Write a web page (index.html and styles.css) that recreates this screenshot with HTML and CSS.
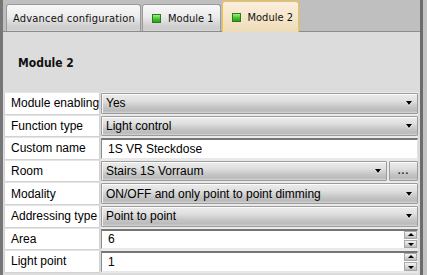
FILE: index.html
```html
<!DOCTYPE html>
<html>
<head>
<meta charset="utf-8">
<link rel="stylesheet" href="styles.css">
</head>
<body>
<div class="window">
  <div class="edge-left"></div>
  <div class="main">
    <div class="tabs">
      <div class="tab wide">Advanced configuration</div>
      <div class="tab"><span class="led"></span>Module 1</div>
      <div class="tab active"><span class="led"></span>Module 2</div>
    </div>
    <div class="panel">
      <div class="title">Module 2</div>
      <div class="form">
        <div class="label">Module enabling</div>
        <div class="field"><div class="select">Yes<span class="arrow"></span></div></div>

        <div class="label">Function type</div>
        <div class="field"><div class="select">Light control<span class="arrow"></span></div></div>

        <div class="label">Custom name</div>
        <div class="field"><div class="input">1S VR Steckdose</div></div>

        <div class="label">Room</div>
        <div class="field with-btn"><div class="select">Stairs 1S Vorraum<span class="arrow"></span></div><div class="dots">...</div></div>

        <div class="label">Modality</div>
        <div class="field"><div class="select">ON/OFF and only point to point dimming<span class="arrow"></span></div></div>

        <div class="label">Addressing type</div>
        <div class="field"><div class="select">Point to point<span class="arrow"></span></div></div>

        <div class="label">Area</div>
        <div class="field"><div class="input spin">6<div class="spinner"><span class="up"></span><span class="down"></span></div></div></div>

        <div class="label">Light point</div>
        <div class="field"><div class="input spin">1<div class="spinner"><span class="up"></span><span class="down"></span></div></div></div>
      </div>
    </div>
  </div>
  <div class="edge-right"></div>
</div>
</body>
</html>
```
FILE: styles.css
```css
html, body {
  margin: 0;
  padding: 0;
}
body {
  width: 427px;
  height: 275px;
  overflow: hidden;
  background: #c0c0c0;
}
.window {
  display: flex;
  height: 275px;
}
.edge-left {
  width: 3px;
  background: #767676;
  flex: none;
}
.edge-right {
  width: 4px;
  flex: none;
  background: #c4c4c4;
  border-left: 3px solid #6c6c6c;
}
.main {
  flex: 1;
  display: flex;
  flex-direction: column;
  min-width: 0;
}
.tabs {
  display: flex;
  align-items: flex-end;
  gap: 1px;
  height: 32px;
  padding-left: 3px;
  background: #bfbfbf;
  border-bottom: 1px solid #8c8c8c;
  box-sizing: border-box;
  font-family: "DejaVu Sans Condensed", "DejaVu Sans", sans-serif;
  font-size: 11px;
  color: #111;
}
.tab {
  display: flex;
  align-items: center;
  height: 27px;
  box-sizing: border-box;
  padding: 1px 6px 0 6px;
  border: 1px solid #9a9a9a;
  border-bottom: none;
  border-radius: 3px 3px 0 0;
  background: linear-gradient(#f7f7f7 0%, #ececec 45%, #d4d4d4 75%, #cbcbcb 92%, #d8d8d8 100%);
}
.tab.wide {
  letter-spacing: 0.2px;
  padding-right: 5px;
}
.tab .led {
  width: 7px;
  height: 7px;
  margin: 0 7px 0 3px;
  border: 1px solid #2d7a1e;
  background: linear-gradient(#9ef07e, #3fbf2a 60%, #2f9f1f);
}
.tab.active {
  height: 31px;
  margin-bottom: -1px;
  border: 1px solid #f4c33e;
  border-bottom: none;
  background: linear-gradient(#fbeedd 0%, #f4e4c6 60%, #eddcb8 100%);
  padding-right: 5px;
  padding-bottom: 1px;
}
.panel {
  flex: 1;
  background: #dcdcdc;
  display: flex;
  flex-direction: column;
}
.title {
  height: 60px;
  box-sizing: border-box;
  padding: 24px 0 0 15px;
  font-family: "DejaVu Sans Condensed", "DejaVu Sans", sans-serif;
  font-weight: bold;
  font-size: 12px;
  color: #111;
}
.form {
  display: grid;
  grid-template-columns: 96px 1fr;
  grid-auto-rows: 22.6px;
  column-gap: 1px;
  padding: 0 2px 0 1px;
  font-family: "Liberation Sans", Arial, sans-serif;
  font-size: 12px;
  color: #000;
}
.label {
  background: #fff;
  border: 1px solid #d2d2d2;
  border-top-color: #e4e4e4;
  display: flex;
  align-items: center;
  padding-left: 6px;
  white-space: nowrap;
  overflow: hidden;
}
.field {
  display: flex;
  align-items: stretch;
  padding: 1px 0;
  gap: 2px;
  background: #eaeaea;
}
.select {
  flex: 1;
  position: relative;
  display: flex;
  align-items: center;
  padding-left: 4px;
  border: 1px solid #9c9c9c;
  border-radius: 1px;
  box-shadow: inset 0 1px 0 #fcfcfc, inset 1px 0 0 #f4f4f4;
  background: linear-gradient(#ececec 0%, #e0e0e0 35%, #c4c4c4 70%, #bababa 90%, #d6d6d6 100%);
  white-space: nowrap;
  overflow: hidden;
}
.arrow {
  position: absolute;
  right: 5px;
  top: 50%;
  margin-top: -2px;
  width: 0;
  height: 0;
  border-left: 3px solid transparent;
  border-right: 3px solid transparent;
  border-top: 4px solid #000;
  filter: drop-shadow(0 1px 0 #fff);
}
.dots {
  width: 29px;
  flex: none;
  display: flex;
  align-items: center;
  justify-content: center;
  border: 1px solid #9c9c9c;
  border-radius: 1px;
  box-shadow: inset 0 1px 0 #fcfcfc;
  background: linear-gradient(#ececec 0%, #e0e0e0 35%, #c4c4c4 70%, #bababa 90%, #d6d6d6 100%);
  font-size: 10px;
  font-weight: bold;
  letter-spacing: 1px;
  color: #222;
  padding-bottom: 2px;
  box-sizing: border-box;
}
.input {
  flex: 1;
  display: flex;
  align-items: center;
  padding-left: 6px;
  background: #fff;
  border-top: 2px solid #767676;
  border-left: 1px solid #8a8a8a;
  border-right: 1px solid #e0e0e0;
  border-bottom: 1px solid #e8e8e8;
  position: relative;
}
.spinner {
  margin-left: auto;
  align-self: stretch;
  display: flex;
  flex-direction: column;
  justify-content: space-between;
  gap: 1px;
  width: 13px;
  padding: 0 0 0 1px;
  background: #fff;
}
.spinner span {
  flex: 1;
  position: relative;
  border: 1px solid #a8a8a8;
  background: linear-gradient(#f4f4f4, #d4d4d4 60%, #bcbcbc);
}
.spinner .up::after,
.spinner .down::after {
  content: "";
  position: absolute;
  left: 50%;
  top: 50%;
  margin-left: -3px;
  width: 0;
  height: 0;
  border-left: 3px solid transparent;
  border-right: 3px solid transparent;
}
.spinner .up::after {
  margin-top: -2px;
  border-bottom: 3px solid #000;
}
.spinner .down::after {
  margin-top: -1px;
  border-top: 3px solid #000;
}
```
